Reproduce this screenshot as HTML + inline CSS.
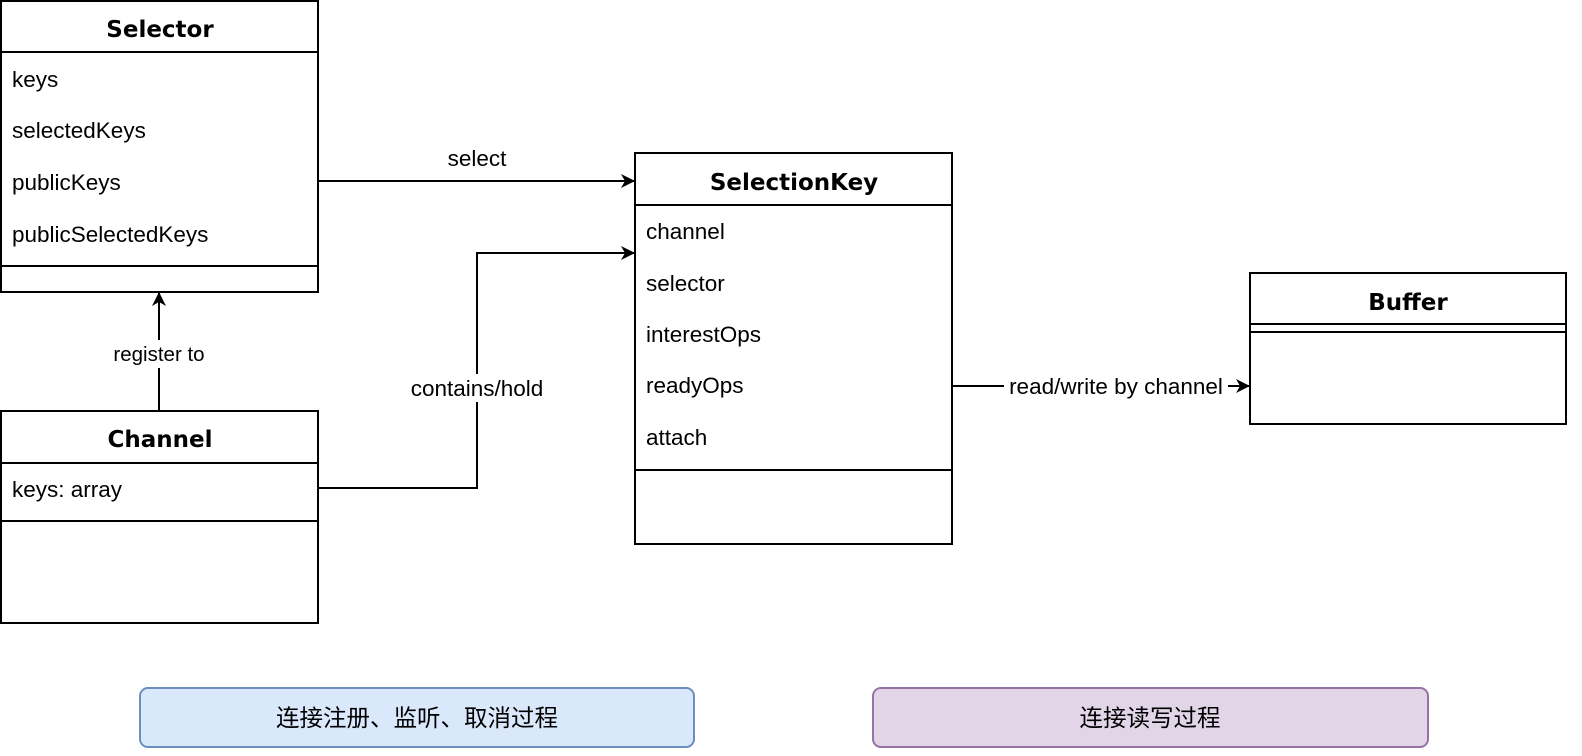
<!DOCTYPE html>
<html><head><meta charset="utf-8"><style>html,body{margin:0;padding:0;background:#fff;width:1582px;height:756px;overflow:hidden}</style></head>
<body>
<svg width="1582" height="756" xmlns="http://www.w3.org/2000/svg" font-family="Liberation Sans, Noto Sans CJK SC, sans-serif">
<defs><marker id="a" markerWidth="14" markerHeight="14" refX="13" refY="7" orient="auto" markerUnits="userSpaceOnUse"><path d="M0,0 L14,7 L0,14 L4,7 Z" fill="#000"/></marker></defs>
<g fill="#fff" stroke="#000" stroke-width="2">
<rect x="1" y="1" width="317" height="291"/>
<rect x="1" y="411" width="317" height="212"/>
<rect x="635" y="153" width="317" height="391"/>
<rect x="1250" y="273" width="316" height="151"/>
</g>
<g stroke="#000" stroke-width="2">
<line x1="1" y1="52" x2="318" y2="52"/><line x1="1" y1="266" x2="318" y2="266"/>
<line x1="1" y1="463" x2="318" y2="463"/><line x1="1" y1="521" x2="318" y2="521"/>
<line x1="635" y1="205" x2="952" y2="205"/><line x1="635" y1="470" x2="952" y2="470"/>
<line x1="1250" y1="324" x2="1566" y2="324"/><line x1="1250" y1="332" x2="1566" y2="332"/>
</g>
<g fill="none" stroke="#000" stroke-width="2">
<path d="M318,181 H634" marker-end="url(#a)"/>
<path d="M318,488 H477 V253 H634" marker-end="url(#a)"/>
<path d="M159,411 V293" marker-end="url(#a)"/>
<path d="M952,386 H1249" marker-end="url(#a)"/>
</g>
<g font-family="DejaVu Sans, sans-serif" font-weight="bold" font-size="23" text-anchor="middle" fill="#000">
<text x="160" y="37">Selector</text><text x="160" y="447">Channel</text>
<text x="794" y="190">SelectionKey</text><text x="1408" y="310">Buffer</text>
</g>
<g font-size="22.5" fill="#000">
<text x="12" y="87">keys</text><text x="12" y="138">selectedKeys</text><text x="12" y="190">publicKeys</text><text x="12" y="242">publicSelectedKeys</text>
<text x="12" y="497">keys: array</text>
<text x="646" y="239">channel</text><text x="646" y="291">selector</text><text x="646" y="342">interestOps</text><text x="646" y="393">readyOps</text><text x="646" y="445">attach</text>
</g>
<rect x="108" y="340" width="103" height="28" fill="#fff"/>
<rect x="404" y="374" width="146" height="28" fill="#fff"/>
<rect x="1004" y="374" width="224" height="26" fill="#fff"/>
<g font-size="22.5" fill="#000" text-anchor="middle">
<text x="477" y="166">select</text>
<text x="477" y="396">contains/hold</text>
<text x="1116" y="394">read/write by channel</text>
<text x="159" y="361" font-size="20.5">register to</text>
</g>
<rect x="140" y="688" width="554" height="59" rx="8" fill="#dae8fc" stroke="#6c8ebf" stroke-width="2"/>
<rect x="873" y="688" width="555" height="59" rx="8" fill="#e1d5e7" stroke="#9673a6" stroke-width="2"/>
<g font-size="23.5" fill="#000" text-anchor="middle">
<text x="417" y="726">连接注册、监听、取消过程</text>
<text x="1150" y="726">连接读写过程</text>
</g>
</svg>
</body></html>
